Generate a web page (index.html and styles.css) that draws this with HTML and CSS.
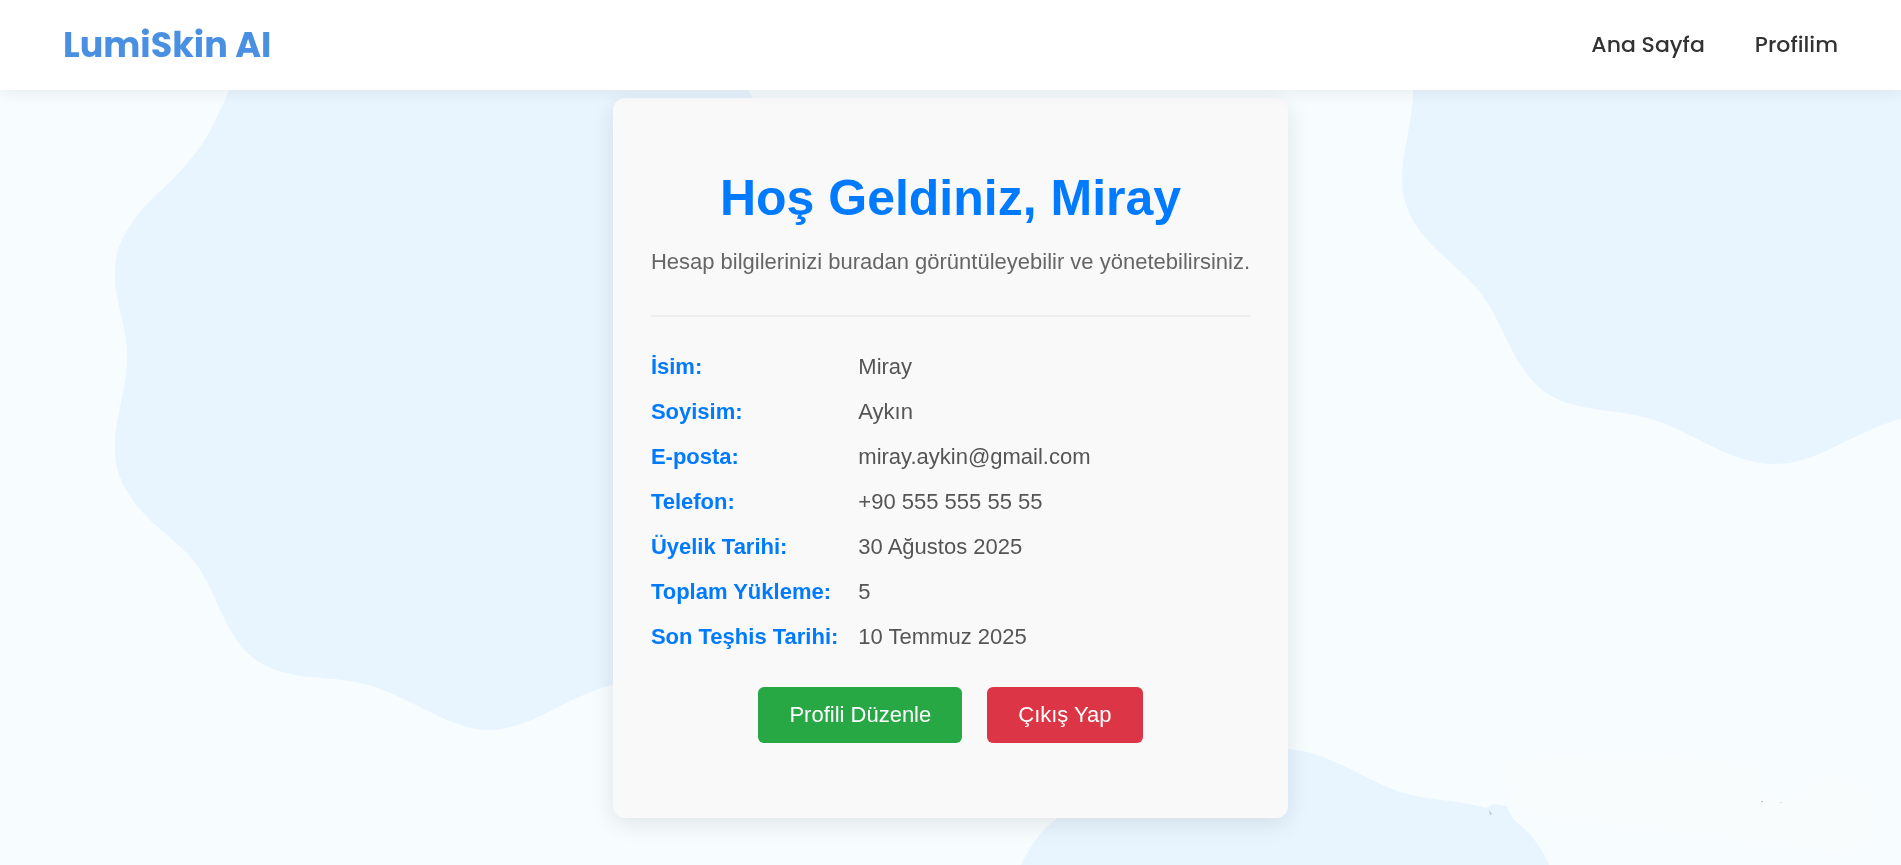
FILE: index.html
```html
<!DOCTYPE html>
<html lang="tr">
<head>
<meta charset="utf-8">
<meta name="viewport" content="width=device-width, initial-scale=1">
<title>LumiSkin AI</title>
<link rel="stylesheet" href="styles.css">
</head>
<body>
<svg class="backdrop" viewBox="0 0 1901 865" preserveAspectRatio="xMidYMid slice" aria-hidden="true">
  <defs>
    <filter id="soft" x="-20%" y="-20%" width="140%" height="140%"><feGaussianBlur stdDeviation="5"/></filter>
  </defs>
  <g fill="#e8f5ff">
    <path d="M237 70 L229 90 C219 113 212 132 194 155 C172 184 151 196 134 220 C121 238 115 252 115 274 C115 304 127 324 127 356 C127 392 115 414 115 448 C115 470 121 483 134 502 C152 526 178 541 194 561 C216 589 224 634 252 657 C285 684 328 673 372 686 C415 700 451 730 490 730 C531 730 572 693 616 684 L800 600 L770 120 L753 98 L748 90 L740 70 Z"/>
    <path d="M1413 70 L1413 90 C1413 122 1402 150 1402 180 C1402 236 1457 260 1482 295 C1506 328 1512 367 1545 392 C1576 414 1620 407 1660 422 C1704 439 1734 464 1775 464 C1819 464 1851 432 1901 419 V70 Z"/>
    <path d="M1021 865 C1031 844 1043 828 1058 818 C1110 784 1220 749 1288 749 C1330 752 1359 778 1403 793 C1433 801 1460 800 1486 808 L1493 804 L1506 806 L1514 820 C1530 832 1540 845 1549 865 Z"/>
  </g>
  <path d="M1492 762 C1560 752 1700 752 1757 765 C1775 790 1740 800 1795 798 C1820 760 1875 775 1876 805 C1876 860 1850 855 1810 850 L1712 838 L1520 814 Z" fill="#f8fcfc" filter="url(#soft)"/>
  <g fill="#b4c3cd">
    <path d="M1489 810 L1492 814 L1490 815 Z"/>
    <rect x="1761" y="801" width="2" height="1"/>
    <rect x="1780" y="802" width="2" height="1" opacity="0.5"/>
  </g>
</svg>
<header class="navbar">
  <a class="logo" href="#">LumiSkin AI</a>
  <nav class="nav-links">
    <a href="#">Ana Sayfa</a>
    <a href="#">Profilim</a>
  </nav>
</header>
<main class="page">
  <section class="card">
    <header class="card-header">
      <h1>Hoş Geldiniz, Miray</h1>
      <p>Hesap bilgilerinizi buradan görüntüleyebilir ve yönetebilirsiniz.</p>
    </header>
    <dl class="details">
      <dt>İsim:</dt><dd>Miray</dd>
      <dt>Soyisim:</dt><dd>Aykın</dd>
      <dt>E-posta:</dt><dd>miray.aykin@gmail.com</dd>
      <dt>Telefon:</dt><dd>+90 555 555 55 55</dd>
      <dt>Üyelik Tarihi:</dt><dd>30 Ağustos 2025</dd>
      <dt>Toplam Yükleme:</dt><dd>5</dd>
      <dt>Son Teşhis Tarihi:</dt><dd>10 Temmuz 2025</dd>
    </dl>
    <div class="actions">
      <button class="btn btn-edit" type="button">Profili Düzenle</button>
      <button class="btn btn-logout" type="button">Çıkış Yap</button>
    </div>
  </section>
</main>
</body>
</html>
```
FILE: styles.css
```css
* { box-sizing: border-box; margin: 0; padding: 0; }

body {
  min-height: 100vh;
  background: #f7fcff;
  font-family: Arial, "Liberation Sans", sans-serif;
  font-size: 22px;
  line-height: 25px;
  color: #555;
}

.backdrop {
  position: fixed;
  inset: 0;
  z-index: -1;
  width: 100%;
  height: 100%;
}

.navbar {
  position: relative;
  z-index: 1;
  display: flex;
  align-items: center;
  justify-content: space-between;
  padding: 18px 63px;
  background: #fff;
  box-shadow: 0 2px 16px rgba(0, 0, 0, 0.07);
  font-family: Poppins, Inter, sans-serif;
}

.logo {
  font-size: 35px;
  line-height: 54px;
  font-weight: 700;
  color: #4a90e2;
  text-decoration: none;
}

.nav-links { display: flex; gap: 50px; }

.nav-links a {
  font-size: 22px;
  line-height: 34px;
  font-weight: 500;
  color: #333;
  text-decoration: none;
}

.page {
  display: flex;
  justify-content: center;
  padding: 8px 20px 40px;
}

.card {
  padding: 71px 38px 75px;
  background: #f9f9f9;
  border-radius: 12px;
  box-shadow: 0 5px 25px rgba(0, 0, 0, 0.1);
}

.card-header {
  padding-bottom: 41px;
  border-bottom: 2px solid #eee;
  text-align: center;
}

.card-header h1 {
  margin-bottom: 22px;
  font-size: 50px;
  line-height: 58px;
  color: #007bff;
}

.card-header p { color: #666; }

.details {
  display: grid;
  grid-template-columns: max-content 1fr;
  gap: 20px;
  padding: 37px 0 38px;
}

.details dt { font-weight: 700; color: #007bff; }

.actions {
  display: flex;
  flex-wrap: wrap;
  justify-content: center;
  gap: 25px;
}

.btn {
  padding: 15px 31px 16px;
  border: 0;
  border-radius: 6px;
  font: inherit;
  color: #fff;
  cursor: pointer;
}

.btn-edit { background: #28a745; }
.btn-logout { background: #dc3545; }
```
